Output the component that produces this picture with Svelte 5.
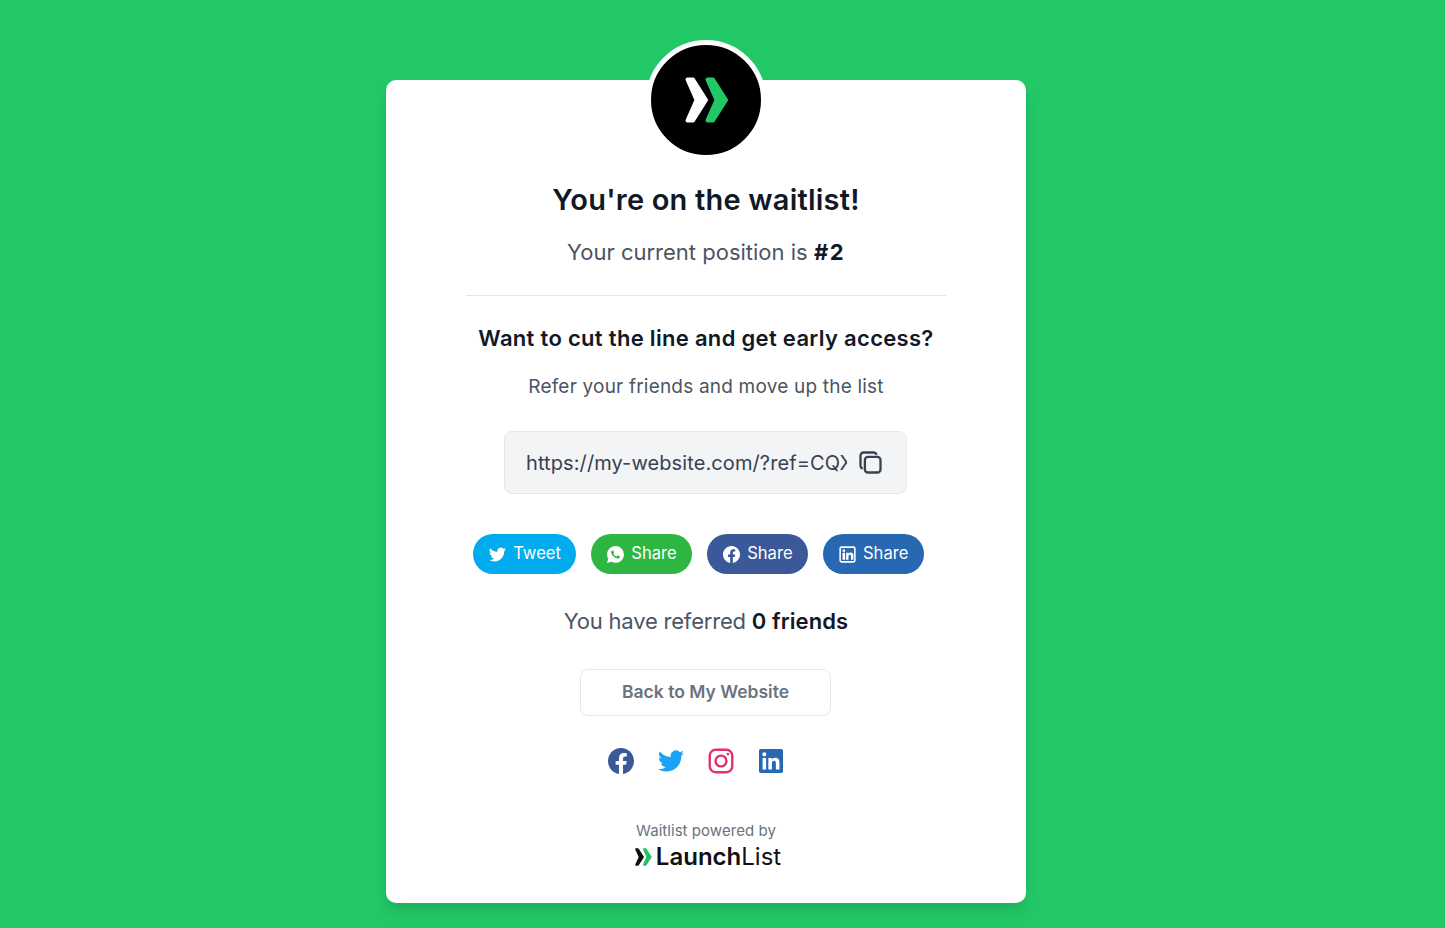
<script>
  const shares = [
    { label: "Tweet", cls: "tw", icon: "tw" },
    { label: "Share", cls: "wa", icon: "wa" },
    { label: "Share", cls: "fb", icon: "fb" },
    { label: "Share", cls: "li", icon: "liOutline" }
  ];

  const paths = {
    tw: "M23.95 4.57a10 10 0 0 1-2.82.78 4.96 4.96 0 0 0 2.16-2.72 9.9 9.9 0 0 1-3.12 1.19 4.92 4.92 0 0 0-8.38 4.48A13.98 13.98 0 0 1 1.64 3.16a4.92 4.92 0 0 0 1.52 6.57 4.9 4.9 0 0 1-2.23-.62v.06a4.92 4.92 0 0 0 3.95 4.83 5 5 0 0 1-2.21.08 4.94 4.94 0 0 0 4.6 3.42A9.87 9.87 0 0 1 0 19.54a13.94 13.94 0 0 0 7.55 2.21c9.05 0 14-7.5 14-13.98 0-.21 0-.42-.02-.63a9.94 9.94 0 0 0 2.42-2.55z",
    fb: "M24 12.07C24 5.4 18.63 0 12 0S0 5.4 0 12.07c0 6.03 4.39 11.02 10.13 11.93v-8.44H7.08v-3.49h3.05V9.41c0-3.02 1.79-4.69 4.53-4.69 1.31 0 2.69.24 2.69.24v2.97h-1.52c-1.49 0-1.95.93-1.95 1.88v2.26h3.33l-.53 3.49h-2.8V24C19.61 23.09 24 18.1 24 12.07z",
    li: "M20.45 20.45h-3.55v-5.57c0-1.33-.03-3.04-1.85-3.04-1.85 0-2.14 1.45-2.14 2.94v5.67H9.35V9h3.41v1.56h.05c.48-.9 1.64-1.85 3.37-1.85 3.6 0 4.27 2.37 4.27 5.46v6.28zM5.34 7.43a2.06 2.06 0 1 1 0-4.12 2.06 2.06 0 0 1 0 4.12zM7.12 20.45H3.56V9h3.56v11.45zM22.22 0H1.77C.79 0 0 .77 0 1.73v20.54C0 23.23.79 24 1.77 24h20.45c.98 0 1.78-.77 1.78-1.73V1.73C24 .77 23.2 0 22.22 0z",
    liOutline: "M3.5 .5h17a3 3 0 0 1 3 3v17a3 3 0 0 1-3 3h-17a3 3 0 0 1-3-3v-17a3 3 0 0 1 3-3zM3.5 2.7a.8.8 0 0 0-.8.8v17a.8.8 0 0 0 .8.8h17a.8.8 0 0 0 .8-.8v-17a.8.8 0 0 0-.8-.8zM5 4.8h3.6v3.4H5zM5 9.6h3.6V19.5H5zM10.3 9.6h3.3v1.3c.6-1 1.7-1.6 3-1.6 2.7 0 3.7 1.7 3.7 4.3v5.9h-3.5v-5c0-1.3-.3-2.2-1.5-2.2s-1.9 1-1.9 2.3v4.9h-3.6z",
    wa: "M12.04 0C5.46 0 .1 5.35.1 11.93c0 2.1.55 4.16 1.6 5.97L0 24l6.3-1.65a11.9 11.9 0 0 0 5.7 1.45h.01c6.58 0 11.93-5.35 11.94-11.93A11.86 11.86 0 0 0 12.04 0zM17.47 14.38c-.3-.15-1.76-.87-2.03-.97-.27-.1-.47-.15-.67.15-.2.3-.77.97-.94 1.16-.17.2-.35.22-.64.07-.3-.15-1.26-.46-2.39-1.47-.88-.79-1.48-1.76-1.65-2.06-.17-.3-.02-.46.13-.6.13-.14.3-.35.45-.52.15-.17.2-.3.3-.5.1-.2.05-.37-.03-.52-.07-.15-.67-1.61-.92-2.2-.24-.58-.49-.5-.67-.51h-.57c-.2 0-.52.07-.79.37-.27.3-1.04 1.02-1.04 2.48s1.07 2.88 1.21 3.07c.15.2 2.1 3.2 5.08 4.49.71.3 1.26.49 1.69.62.71.23 1.36.2 1.87.12.57-.09 1.76-.72 2.01-1.41.25-.7.25-1.29.17-1.41-.07-.13-.27-.2-.57-.35z"
  };

  const chevron = (x) => {
    const p = [[2.5, 2.5], [8, 2.5], [21, 23], [8, 43.5], [2.5, 43.5], [11.5, 23]];
    return p.map(([a, b]) => `${a + x},${b}`).join(" ");
  };
</script>

<main>
  <div class="card">
    <div class="avatar">
      <svg viewBox="-1 0 44 46" width="44" height="46" stroke-width="4" stroke-linejoin="round" aria-hidden="true">
        <polygon points={chevron(0)} fill="#fff" stroke="#fff" />
        <polygon points={chevron(20)} fill="#22c766" stroke="#22c766" />
      </svg>
    </div>

    <h1>You're on the waitlist!</h1>
    <p class="position">Your current position is <b>#2</b></p>
    <hr />

    <h2>Want to cut the line and get early access?</h2>
    <p class="refer">Refer your friends and move up the list</p>

    <div class="link">
      <input type="text" readonly value="https://my-website.com/?ref=CQXPL7K2" aria-label="Referral link" />
      <svg viewBox="0 0 24 24" width="25" height="25" fill="none" stroke="#374151" stroke-width="2.2" stroke-linejoin="round" aria-hidden="true">
        <rect x="6.6" y="6.6" width="15" height="15" rx="3" />
        <path d="M17.5 3.8A2.6 2.6 0 0 0 15.2 2.4H5.4a3 3 0 0 0-3 3v9.8a2.6 2.6 0 0 0 1.4 2.3" stroke-linecap="round" />
      </svg>
    </div>

    <div class="shares">
      {#each shares as s}
        <a class="share {s.cls}" href="#top">
          <svg viewBox="0 0 24 24" width="17" height="17" fill="#fff" fill-rule="evenodd" aria-hidden="true"><path d={paths[s.icon]} /></svg>
          <span>{s.label}</span>
        </a>
      {/each}
    </div>

    <p class="referred">You have referred <b>0 friends</b></p>

    <a class="back" href="#top">Back to My Website</a>

    <div class="socials">
      <a href="#top" aria-label="Facebook">
        <svg viewBox="0 0 24 24" width="26" height="26" fill="#3b5998" aria-hidden="true"><path d={paths.fb} /></svg>
      </a>
      <a href="#top" aria-label="Twitter">
        <svg viewBox="0 0 24 24" width="26" height="26" fill="#1da1f2" aria-hidden="true"><path d={paths.tw} /></svg>
      </a>
      <a href="#top" aria-label="Instagram">
        <svg viewBox="0 0 24 24" width="26" height="26" fill="none" stroke="#e1306c" stroke-width="2.2" aria-hidden="true">
          <rect x="1.6" y="1.6" width="20.8" height="20.8" rx="5.5" />
          <circle cx="12" cy="12" r="5" />
          <circle cx="18.4" cy="5.6" r="1.3" fill="#e1306c" stroke="none" />
        </svg>
      </a>
      <a href="#top" aria-label="LinkedIn">
        <svg viewBox="0 0 24 24" width="24" height="24" fill="#2867b2" aria-hidden="true"><path d={paths.li} /></svg>
      </a>
    </div>

    <p class="powered">Waitlist powered by</p>
    <div class="brand">
      <svg viewBox="0 0 44 46" width="17" height="18" stroke-width="4" stroke-linejoin="round" aria-hidden="true">
        <polygon points={chevron(0)} fill="#111" stroke="#111" />
        <polygon points={chevron(20)} fill="#22c55e" stroke="#22c55e" />
      </svg>
      <span><b>Launch</b>List</span>
    </div>
  </div>
</main>

<style>
  :global(body) {
    background: #22c766;
    font-family: "Inter", "Open Sans", sans-serif;
  }

  main {
    display: flex;
    justify-content: center;
    padding: 80px 33px 25px 0;
  }

  .card {
    width: 640px;
    height: 823px;
    box-sizing: border-box;
    background: #fff;
    border-radius: 10px;
    box-shadow: 0 10px 15px -3px rgba(0, 0, 0, 0.1), 0 4px 6px -2px rgba(0, 0, 0, 0.05);
    display: flex;
    flex-direction: column;
    align-items: center;
    text-align: center;
  }

  .avatar {
    width: 110px;
    height: 110px;
    margin-top: -40px;
    border: 5px solid #fff;
    border-radius: 50%;
    background: #000;
    display: flex;
    align-items: center;
    justify-content: center;
    flex: none;
  }

  h1 {
    margin: 20px 0 0 0;
    font-size: 29px;
    letter-spacing: 0.2px;
    line-height: 40px;
    font-weight: 600;
    color: #111827;
  }

  .position {
    margin: 16px 0 0 0;
    font-size: 22px;
    line-height: 32px;
    color: #4b5563;
  }

  .position b {
    color: #111827;
    font-weight: 700;
    letter-spacing: 1.5px;
  }

  hr {
    width: 480px;
    margin: 27px 0 0 0;
    border: 0;
    border-top: 1px solid #e5e7eb;
  }

  h2 {
    margin: 27px 0 0 0;
    font-size: 22px;
    letter-spacing: 0.31px;
    line-height: 30px;
    font-weight: 600;
    color: #111827;
  }

  .refer {
    margin: 20px 0 0 0;
    font-size: 19px;
    letter-spacing: 0.2px;
    line-height: 28px;
    color: #4b5563;
  }

  .link {
    width: 403px;
    height: 63px;
    margin: 30px 1px 0 0;
    box-sizing: border-box;
    background: #f3f4f6;
    border: 1px solid #e5e7eb;
    border-radius: 8px;
    padding: 0 23px 0 21px;
    display: flex;
    align-items: center;
    justify-content: space-between;
  }

  .link input {
    width: 321px;
    border: 0;
    padding: 0;
    background: none;
    outline: none;
    font: inherit;
    font-size: 20px;
    letter-spacing: 0.1px;
    color: #374151;
  }

  .shares {
    display: flex;
    margin-top: 40px;
  }

  .share {
    height: 40px;
    margin-right: 15px;
    padding: 0 15.4px 0 16px;
    border-radius: 20px;
    display: flex;
    align-items: center;
    gap: 7px;
    color: #fff;
    font-size: 16.6px;
    font-weight: 400;
    text-decoration: none;
  }

  .share span {
    margin-top: -2px;
  }

  .tw { background: #00acee; }
  .wa { background: #2db742; }
  .fb { background: #3b5998; }
  .li { background: #2867b2; }

  .referred {
    margin: 31px 0 0 0;
    font-size: 22px;
    letter-spacing: -0.2px;
    line-height: 32px;
    color: #4b5563;
  }

  .referred b {
    color: #111827;
    font-weight: 600;
    letter-spacing: 0.1px;
  }

  .back {
    width: 251px;
    height: 47px;
    margin: 32px 1px 0 0;
    padding-bottom: 2px;
    box-sizing: border-box;
    border: 1px solid #e5e7eb;
    border-radius: 8px;
    display: flex;
    align-items: center;
    justify-content: center;
    color: #6b7280;
    font-size: 17.5px;
    font-weight: 600;
    text-decoration: none;
  }

  .socials {
    display: flex;
    align-items: center;
    margin-top: 32px;
    height: 26px;
  }

  .socials a {
    width: 30px;
    margin-right: 20px;
    display: flex;
    justify-content: center;
  }

  .powered {
    margin: 47px 0 0 0;
    font-size: 15px;
    letter-spacing: 0.05px;
    line-height: 20px;
    color: #6b7280;
  }

  .brand {
    margin: 2px 0 0 4px;
    display: flex;
    align-items: center;
    gap: 4px;
    font-size: 24px;
    line-height: 28px;
    color: #111;
  }

  .brand b {
    font-weight: 600;
  }

  .brand span {
    font-weight: 400;
  }
</style>
